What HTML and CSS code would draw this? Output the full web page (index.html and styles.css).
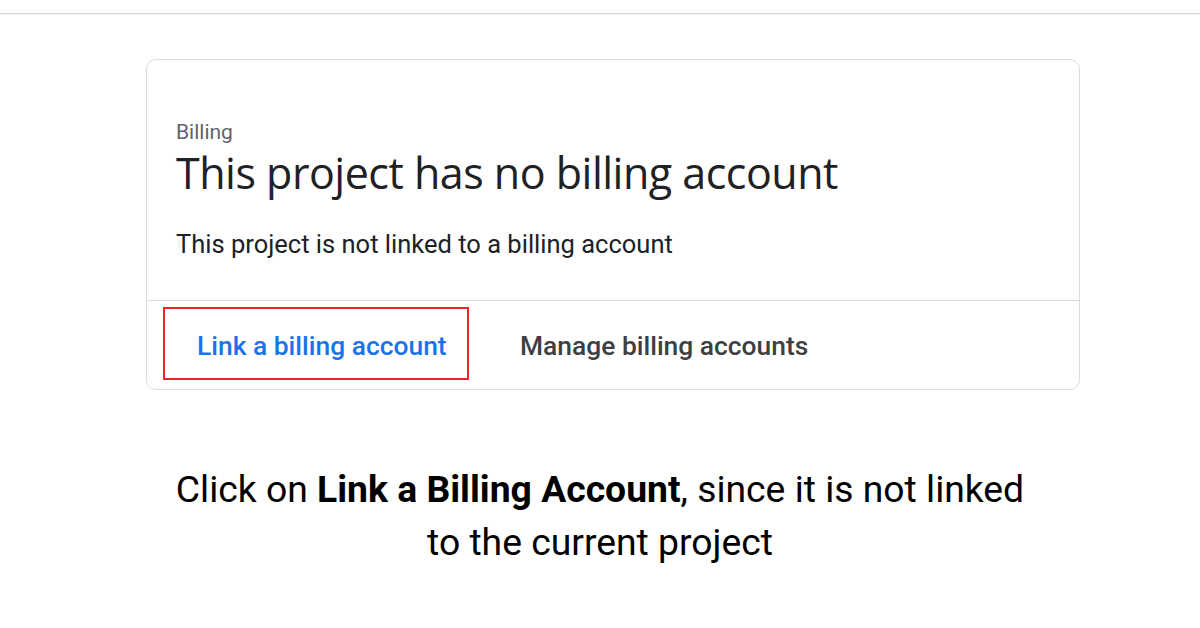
FILE: index.html
```html
<!DOCTYPE html>
<html>
<head>
<meta charset="utf-8">
<link rel="stylesheet" href="styles.css">
</head>
<body>
<div class="topline"></div>
<main class="page">
  <section class="card">
    <div class="card-body">
      <div class="eyebrow">Billing</div>
      <h1 class="title">This project has no billing account</h1>
      <p class="desc">This project is not linked to a billing account</p>
    </div>
    <div class="card-actions">
      <div class="highlight"><span class="btn btn-primary">Link a billing account</span></div>
      <span class="btn btn-secondary">Manage billing accounts</span>
    </div>
  </section>
  <p class="caption">Click on <strong>Link a Billing Account</strong>, since it is not linked<br>to the current project</p>
</main>
</body>
</html>
```
FILE: styles.css
```css
html, body { margin: 0; padding: 0; background: #fff; }
body { width: 1200px; height: 628px; overflow: hidden; font-family: Roboto, sans-serif; }
.topline { height: 13px; border-bottom: 1px solid #dcdcdc; box-shadow: 0 1px 0 #f0f0f0; }
.page { display: flex; flex-direction: column; align-items: center; padding-top: 45px; }
.card { width: 934px; border: 1px solid #dadce0; border-radius: 10px; box-sizing: border-box; margin-left: 26px; }
.card-body { padding: 60px 30px 0 29px; height: 240px; box-sizing: border-box; }
.eyebrow { font-family: Roboto, sans-serif; font-size: 21px; color: #5f6368; line-height: 24px; }
.title { margin: 5px 0 0; font-family: "Open Sans", sans-serif; font-weight: 400; font-size: 43px; color: #202124; line-height: 48px; letter-spacing: -0.5px; }
.desc { margin: 32px 0 0; font-family: Roboto, sans-serif; font-size: 25.5px; line-height: 30px; color: #202124; }
.card-actions { border-top: 1px solid #dadce0; display: flex; align-items: center; padding: 6px 0 9px 16px; gap: 51px; }
.highlight { border: 2px solid #e5262b; height: 73px; width: 306px; box-sizing: border-box; display: flex; align-items: center; padding-left: 32px; }
.btn { font-family: Roboto, sans-serif; font-size: 26.4px; font-weight: 500; padding-top: 4px; }
.btn-primary { color: #1a73e8; }
.btn-secondary { color: #3c4043; }
.caption { margin: 73px 0 0; text-align: center; font-family: Roboto, sans-serif; font-size: 37.3px; line-height: 53px; color: #000; }
.caption strong { font-weight: 700; }
```
